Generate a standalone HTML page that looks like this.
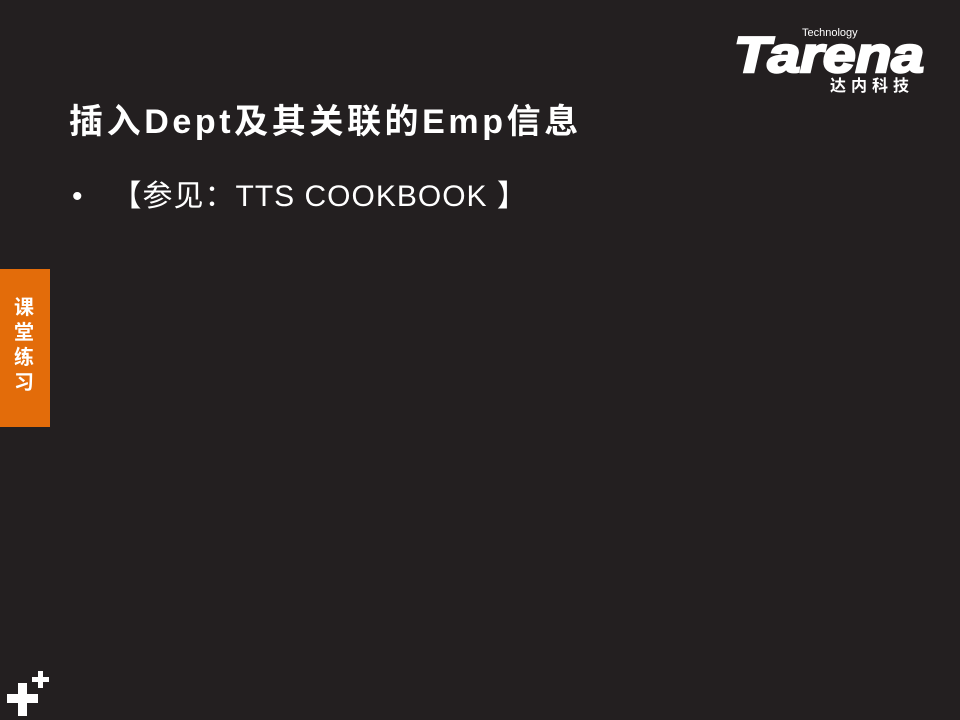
<!DOCTYPE html>
<html><head><meta charset="utf-8"><style>
body{margin:0;width:960px;height:720px;background:#231f20;position:relative;overflow:hidden;font-family:"Liberation Sans","Noto Sans CJK SC",sans-serif;color:#fff}
.t{position:absolute;left:69px;top:94px;font-size:34px;font-weight:bold;white-space:nowrap;letter-spacing:3.6px}
.b{position:absolute;left:72px;top:171px;font-size:30px;white-space:nowrap;letter-spacing:1px}
.tab{position:absolute;left:0;top:269px;width:50px;height:158px;background:#e36c0a}
.tab div{position:absolute;left:13px;top:27px;width:22px;font-size:20px;font-weight:bold;line-height:25px;text-align:center}
.p{position:absolute;background:#fff}
</style></head><body>
<svg style="position:absolute;left:730px;top:24px" width="200" height="72">
<text x="72" y="12" font-family="Liberation Sans" font-size="11" fill="#fff">Technology</text>
<text x="4" y="48" font-family="Liberation Sans" font-weight="bold" font-style="italic" font-size="50" fill="#fff" stroke="#fff" stroke-width="2.5" textLength="190" lengthAdjust="spacingAndGlyphs">Tarena</text>
<text x="100" y="67" font-family="Noto Sans CJK SC" font-weight="bold" font-size="16" fill="#fff" letter-spacing="5">达内科技</text>
</svg>
<div class="t">插入Dept及其关联的Emp信息</div>
<div class="b">•&nbsp;&nbsp;&nbsp;【参见：TTS COOKBOOK 】</div>
<div class="tab"><div>课<br>堂<br>练<br>习</div></div>
<div class="p" style="left:7px;top:694px;width:31px;height:9px"></div>
<div class="p" style="left:18px;top:683px;width:9px;height:33px"></div>
<div class="p" style="left:32px;top:677px;width:17px;height:5px"></div>
<div class="p" style="left:38px;top:671px;width:5px;height:17px"></div>
</body></html>
